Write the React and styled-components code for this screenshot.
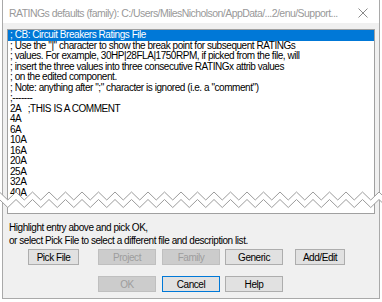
import React from "react";
import styled, { createGlobalStyle } from "styled-components";

const GlobalStyle = createGlobalStyle`
  html, body { margin: 0; padding: 0; background: #ffffff; }
  body {
    font-family: "Liberation Sans", Arial, sans-serif;
    letter-spacing: -0.45px;
  }
`;

const Page = styled.div`
  position: relative;
  width: 382px;
  height: 302px;
  overflow: hidden;
  background: #ffffff;
`;

const Window = styled.div`
  margin-left: 2px;
  width: 376px;
  height: 298px;
  border: 1px solid #a9a9a9;
  border-top: none;
  background: #f0f0f0;
  display: flex;
  flex-direction: column;
`;

const TitleBar = styled.div`
  height: 23px;
  flex: none;
  background: #ffffff;
  display: flex;
  align-items: center;
  justify-content: space-between;
  padding: 2px 11px 0 6px;
  box-sizing: border-box;
  color: #999999;
  font-size: 10.5px;
  letter-spacing: -0.55px;
`;

const TitleText = styled.span`
  white-space: nowrap;
`;

const Body = styled.div`
  display: flex;
  flex-direction: column;
  padding: 6px 4px 0 4px;
`;

const ListBox = styled.div`
  height: 185px;
  box-sizing: border-box;
  border: 1px solid #a0a0a0;
  background: #ffffff;
  overflow: hidden;
`;

const Row = styled.div`
  height: 10.5px;
  line-height: 10.5px;
  font-size: 10px;
  padding-left: 2px;
  white-space: pre;
  color: ${(p) => (p.$selected ? "#ffffff" : "#000000")};
  background: ${(p) => (p.$selected ? "#0078d7" : "transparent")};
`;

const Status = styled.div`
  margin-top: 7px;
  padding-left: 2px;
  font-size: 10px;
  line-height: 13px;
  color: #000000;
`;

const ButtonRow = styled.div`
  display: flex;
  margin-top: ${(p) => p.$top}px;
  padding-left: ${(p) => p.$indent}px;
`;

const Button = styled.div`
  box-sizing: border-box;
  height: 16px;
  width: ${(p) => p.$w}px;
  margin-left: ${(p) => p.$ml || 0}px;
  display: flex;
  align-items: center;
  justify-content: center;
  font-size: 10px;
  border: 1px solid ${(p) => (p.$disabled ? "#bfbfbf" : p.$default ? "#0078d7" : "#adadad")};
  background: ${(p) => (p.$disabled ? "#cccccc" : "#e1e1e1")};
  color: ${(p) => (p.$disabled ? "#9d9d9d" : "#000000")};
`;

const Tear = styled.svg`
  position: absolute;
  left: 0;
  top: 186px;
`;

const rows = [
  "; CB: Circuit Breakers Ratings File",
  '; Use the "|" character to show the break point for subsequent RATINGs',
  "; values. For example, 30HP|28FLA|1750RPM, if picked from the file, will",
  "; insert the three values into three consecutive RATINGx attrib values",
  "; on the edited component.",
  '; Note: anything after ";" character is ignored (i.e. a "comment")',
  ";-------",
  "2A   ;THIS IS A COMMENT",
  "4A",
  "6A",
  "10A",
  "16A",
  "20A",
  "25A",
  "32A",
  "40A",
];

function zig(offset) {
  const pts = [];
  const period = 16.5;
  for (let i = -1; i <= 50; i++) {
    const x = -0.5 + (i * period) / 2;
    const y = (i % 2 === 0 ? 6 : 14) + offset;
    pts.push([x, y]);
  }
  return pts;
}

function TornEdge() {
  const a = zig(0);
  const b = zig(7.5);
  const poly = [...a, ...b.slice().reverse()].map((p) => p.join(",")).join(" ");
  return (
    <Tear width="382" height="30" viewBox="0 0 382 30">
      <polygon points={poly} fill="#ffffff" />
      <polyline points={a.map((p) => p.join(",")).join(" ")} fill="none" stroke="#9c9c9c" strokeWidth="1" />
      <polyline points={b.map((p) => p.join(",")).join(" ")} fill="none" stroke="#9c9c9c" strokeWidth="1" />
    </Tear>
  );
}

export default function App() {
  return (
    <Page>
      <GlobalStyle />
      <Window>
        <TitleBar>
          <TitleText>
            RATINGs defaults (family): C:/Users/MilesNicholson/AppData/...2/enu/Support...
          </TitleText>
          <svg width="10" height="10" viewBox="0 0 10 10">
            <path d="M0.5 0.5 L9.5 9.5 M9.5 0.5 L0.5 9.5" stroke="#8a8a8a" strokeWidth="1" fill="none" />
          </svg>
        </TitleBar>
        <Body>
          <ListBox>
            {rows.map((r, i) => (
              <Row key={i} $selected={i === 0}>
                {r}
              </Row>
            ))}
          </ListBox>
          <Status>
            Highlight entry above and pick OK,
            <br />
            or select Pick File to select a different file and description list.
          </Status>
        </Body>
        <ButtonRow $top={2} $indent={25}>
          <Button $w={51}>Pick File</Button>
          <Button $w={58} $ml={19} $disabled>Project</Button>
          <Button $w={58} $ml={6} $disabled>Family</Button>
          <Button $w={58} $ml={5}>Generic</Button>
          <Button $w={50} $ml={12}>Add/Edit</Button>
        </ButtonRow>
        <ButtonRow $top={11} $indent={95}>
          <Button $w={58} $disabled>OK</Button>
          <Button $w={58} $ml={6} $default>Cancel</Button>
          <Button $w={58} $ml={5}>Help</Button>
        </ButtonRow>
      </Window>
      <TornEdge />
    </Page>
  );
}
